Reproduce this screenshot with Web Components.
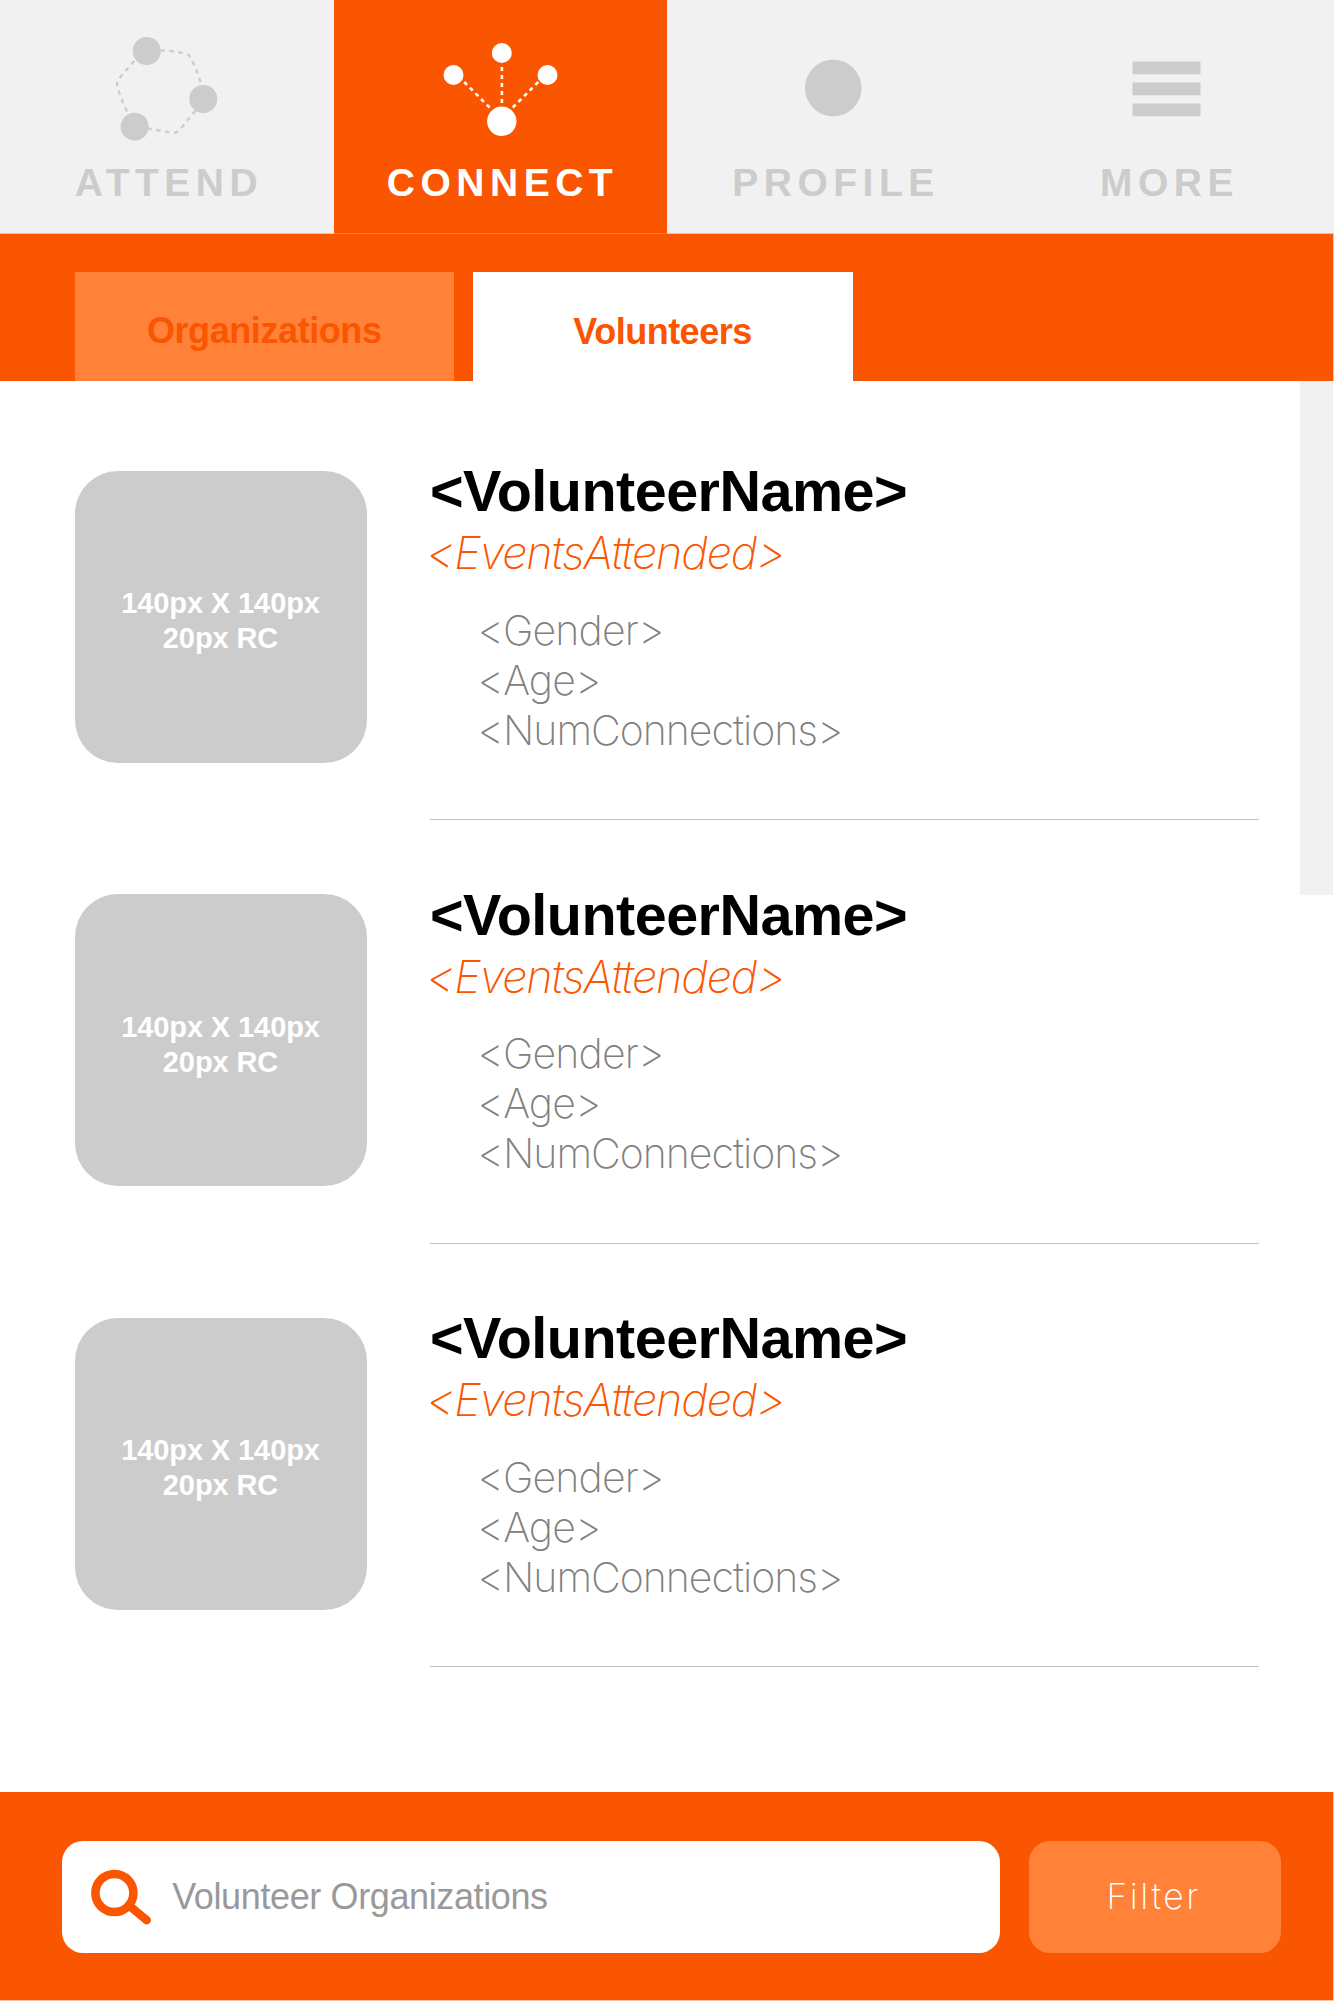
<!DOCTYPE html>
<html lang="en">
<head>
<meta charset="utf-8">
<title>Connect – Volunteers</title>
<style>
html,body{margin:0;padding:0;background:#fff}
body{font-family:"Liberation Sans",Arial,sans-serif;overflow:hidden}
</style>
</head>
<body>
<connect-app></connect-app>
<script>
const define = (name, markup) => customElements.define(name, class extends HTMLElement {
  constructor() {
    super();
    const t = document.createElement('template');
    t.innerHTML = markup;
    this.attachShadow({ mode: 'open' }).append(t.content.cloneNode(true));
  }
});

define('nav-item', `
<style>
:host{display:flex;flex-direction:column;align-items:center;flex:1 1 0;height:234px;box-sizing:border-box;
  background:#f1f1f1;color:#ccc;border-bottom:1px solid #e9bfae}
:host([active]){background:#fa5500;color:#fff;border-bottom-color:#fb7836}
::slotted(svg){display:block;width:333px;height:162.5px;flex:none}
span{font-weight:700;font-size:39px;line-height:40px;letter-spacing:5.5px;padding-left:4.5px;white-space:nowrap}
</style>
<slot name="icon"></slot><span><slot></slot></span>`);

define('tab-item', `
<style>
:host{display:block;box-sizing:border-box;width:379.5px;padding-top:39px;text-align:center;color:#fa5500;
  background:#ff8238;font-weight:700;font-size:36px;line-height:40px;letter-spacing:-.42px}
:host([active]){background:#fff;width:380px;padding-top:40px;letter-spacing:-.5px}
</style>
<slot></slot>`);

define('photo-placeholder', `
<style>
:host{display:block;flex:none;box-sizing:border-box;width:292px;height:292px;border-radius:43px;background:#ccc;
  color:#fff;text-align:center;font-weight:700;font-size:29px;line-height:35.3px;letter-spacing:-.1px;padding:115.5px 0 0 0}
</style>
<div>140px X 140px</div><div>20px RC</div>`);

define('volunteer-row', `
<style>
:host{display:flex;height:359px}
photo-placeholder{margin:9.5px 63.5px 0 0}
.body{width:828.5px;box-sizing:border-box;border-bottom:1px solid #c2c2c2;white-space:nowrap}
.name{font-weight:700;font-size:57.5px;line-height:60px;letter-spacing:-.5px;color:#000}
.events{margin:7px 0 0 -3.5px;font:italic 180 45px/50px Inter,sans-serif;letter-spacing:-1.2px;color:#fa5500}
.details{margin:26.5px 0 0 47.5px;font:250 41px/50px Inter,sans-serif;letter-spacing:-1px;color:#808080}
.details ::slotted(*){display:block}
</style>
<photo-placeholder></photo-placeholder>
<div class="body">
  <div class="name"><slot name="name"></slot></div>
  <div class="events"><slot name="events"></slot></div>
  <div class="details"><slot></slot></div>
</div>`);

define('search-field', `
<style>
:host{display:flex;align-items:center;box-sizing:border-box;width:937.5px;height:112px;border-radius:21px;background:#fff;
  color:#999;font-size:36px;letter-spacing:-.38px;padding-left:28px}
svg{display:block;width:62px;height:60px;margin-right:20.2px;flex:none}
</style>
<svg viewBox="90 1866 62 60" fill="none" stroke="#fa5500"><circle cx="114.4" cy="1892" r="19" stroke-width="8.6"/><path d="M129 1904.5 146.8 1919.2" stroke-width="8.4" stroke-linecap="round"/></svg>
<slot></slot>`);

define('filter-button', `
<style>
:host{display:block;box-sizing:border-box;width:252px;height:112px;border-radius:21px;background:#ff8238;color:#fff;
  font:250 35.5px/112px Inter,sans-serif;letter-spacing:2.5px;padding-left:78px}
</style>
<slot></slot>`);

const person = `
<volunteer-row>
  <span slot="name">&lt;VolunteerName&gt;</span>
  <span slot="events">&lt;EventsAttended&gt;</span>
  <span style="letter-spacing:-.85px">&lt;Gender&gt;</span><span style="letter-spacing:-.8px">&lt;Age&gt;</span><span>&lt;NumConnections&gt;</span>
</volunteer-row>`;

define('connect-app', `
<style>
:host{display:flex;flex-direction:column;width:1334px;height:2001px;background:#fff}
nav{display:flex;flex:none}
.tabs{display:flex;flex:none;gap:18.5px;height:146.5px;box-sizing:border-box;padding:37.5px 0 0 74.5px;background:#fa5500;border-right:1px solid #fdc3a6}
main{display:flex;flex:1;min-height:0;align-items:flex-start}
.list{flex:none;width:1300px;box-sizing:border-box;padding:80.5px 0 0 74.5px;display:flex;flex-direction:column;gap:64.5px}
.scroll{width:33px;height:514px;background:#f1f1f1}
footer{display:flex;flex:none;gap:29px;height:209.5px;box-sizing:border-box;padding:49px 0 0 62px;background:#fa5500;border-right:1px solid #fdc3a6;border-bottom:1px solid #fdc3a6}
</style>
<nav>
  <nav-item><svg slot="icon" viewBox="0 0 333 162.5">
    <g fill="none" stroke="#ccc" stroke-width="2.3" stroke-dasharray="4.5 4.5">
      <path d="M160.5 50.5Q171 50.5 185 53.5 189.5 54.5 191.5 59 197 70 201 84"/>
      <path d="M195.5 110.5 180.5 129Q177 133.5 171.5 132.7L148 128.5"/>
      <path d="M127 111.5Q121 99 117.5 87 116 82 119.5 78L135 60"/>
    </g>
    <g fill="#ccc"><circle cx="146.7" cy="51" r="14"/><circle cx="203.3" cy="99" r="14"/><circle cx="134.7" cy="126.7" r="14"/></g>
  </svg>ATTEND</nav-item>
  <nav-item active><svg slot="icon" viewBox="333.5 0 333 162.5">
    <g fill="none" stroke="#fff" stroke-width="2.6" stroke-dasharray="4 4">
      <path d="M501.4 67V103.500M463.700 82 489.600 108M537.700 82 511.800 108"/>
    </g>
    <g fill="#fff"><circle cx="453" cy="75" r="10"/><circle cx="501.3" cy="53" r="10"/><circle cx="547" cy="75" r="10"/><circle cx="501.3" cy="121.3" r="14.7"/></g>
  </svg>CONNECT</nav-item>
  <nav-item><svg slot="icon" viewBox="667.2 0 333 162.5"><circle cx="833.5" cy="88" r="28.3" fill="#ccc"/></svg>PROFILE</nav-item>
  <nav-item><svg slot="icon" viewBox="1001 0 333 162.5"><path fill="#ccc" d="M1132.5 61.500h68v12.700h-68zM1132.500 82.500h68v12.700h-68zM1132.500 103.500h68v12.700h-68z"/></svg>MORE</nav-item>
</nav>
<div class="tabs"><tab-item>Organizations</tab-item><tab-item active>Volunteers</tab-item></div>
<main>
  <div class="list">${person}${person}${person}</div>
  <div class="scroll"></div>
</main>
<footer><search-field>Volunteer Organizations</search-field><filter-button>Filter</filter-button></footer>`);
</script>
</body>
</html>
